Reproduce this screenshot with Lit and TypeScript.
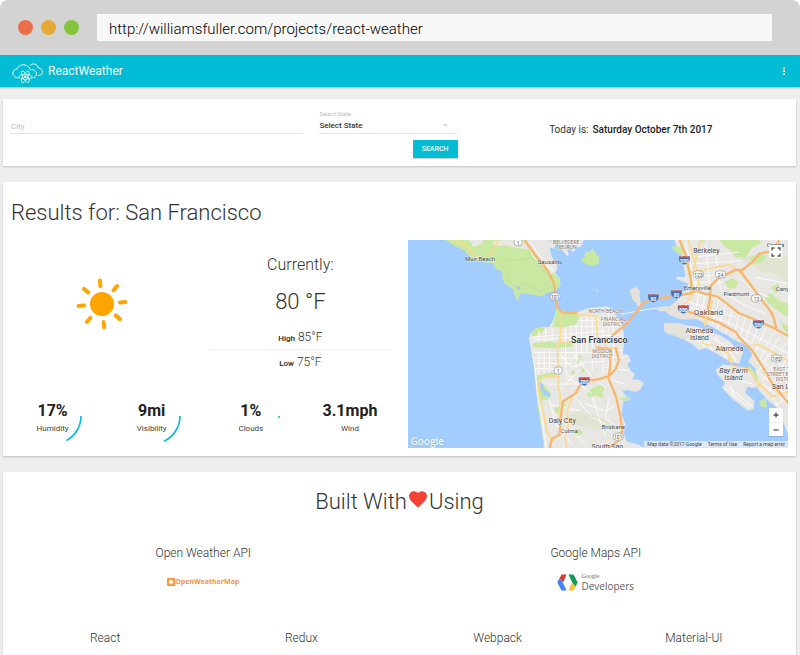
import { LitElement, html, css, svg } from "lit";
import { customElement, property } from "lit/decorators.js";

/* ---------- One reading with its percentage arc ---------- */

@customElement("weather-stat")
class WeatherStat extends LitElement {
  @property() value = "";
  @property() label = "";
  @property({ type: Number }) percent = 0;

  static styles = css`
    :host {
      position: relative;
      display: flex;
      flex-direction: column;
      align-items: center;
      height: 58px;
      padding-top: 13px;
      box-sizing: border-box;
    }
    .value {
      font-size: 16px;
      line-height: 22px;
      font-weight: 700;
      color: #212121;
    }
    .label {
      font-size: 8px;
      line-height: 14px;
      color: #424242;
    }
    .arc {
      position: absolute;
      inset: 0;
      margin: auto;
      width: 58px;
      height: 58px;
    }
    .arc circle {
      fill: none;
      stroke: #00bcd4;
      stroke-width: 1.6;
    }
  `;

  render() {
    return html`
      <span class="value">${this.value}</span>
      <span class="label">${this.label}</span>
      ${this.percent
        ? html`<svg class="arc" viewBox="0 0 58 58" aria-hidden="true">
            <circle cx="29" cy="29" r="28" pathLength="100" stroke-dasharray="${this.percent} 100" />
          </svg>`
        : null}
    `;
  }
}

/* ---------- Map of the bay ---------- */

type Place = [string, number, number, number, string];

const PLACES: Place[] = [
  ["Muir Beach", 72, 21, 6, "town"],
  ["Sausalito", 142, 24, 6, "town"],
  ["BELVEDERE", 158, 4, 5, "area"],
  ["TIBURON", 158, 9, 5, "area"],
  ["Berkeley", 298, 13, 7, "town"],
  ["Orinda", 367, 7, 6, "town"],
  ["Emeryville", 289, 50, 6, "town"],
  ["Piedmont", 328, 56, 6, "town"],
  ["Cany", 374, 51, 6, "town"],
  ["Oakland", 300, 75, 8, "town"],
  ["NORTH BEACH", 197, 73, 5, "area"],
  ["FINANCIAL", 205, 81, 5, "area"],
  ["DISTRICT", 205, 86, 5, "area"],
  ["San Francisco", 191, 103, 9, "city"],
  ["MISSION", 194, 113, 5, "area"],
  ["DISTRICT", 194, 118, 5, "area"],
  ["Alameda", 291, 93, 7, "town"],
  ["Island", 291, 100, 7, "town"],
  ["Alameda", 321, 111, 7, "town"],
  ["Bay Farm", 325, 133, 7, "isle"],
  ["Island", 325, 140, 7, "isle"],
  ["EAST 1", 373, 131, 5, "area"],
  ["STREET BU", 371, 136, 5, "area"],
  ["DISTR", 374, 141, 5, "area"],
  ["San L", 372, 149, 7, "town"],
  ["Daly City", 154, 183, 7, "town"],
  ["Colma", 161, 193, 6, "town"],
  ["Brisbane", 205, 189, 6, "town"],
  ["South San", 199, 209, 7, "town"],
];

const ROUTES: [string, number, number][] = [
  ["1", 110, 3],
  ["101", 147, 57],
  ["1", 150, 131],
  ["123", 290, 35],
  ["24", 312, 35],
  ["13", 348, 59],
  ["185", 368, 119],
  ["101", 210, 197],
];

const INTERSTATES: [string, number, number][] = [
  ["580", 276, 20],
  ["80", 268, 54],
  ["80", 245, 58],
  ["880", 275, 69],
  ["580", 350, 84],
  ["280", 176, 141],
];

@customElement("bay-map")
class BayMap extends LitElement {
  static styles = css`
    :host {
      position: relative;
      display: block;
      overflow: hidden;
      height: 208px;
    }
    .canvas {
      display: block;
      width: 100%;
      height: 208px;
      background: #a3ccff;
      font-family: Roboto, "Liberation Sans", sans-serif;
    }
    .land { fill: #e9e7e4; }
    .park { fill: #c9e8a2; }
    .hill { fill: #dfe5d0; }
    .port { fill: #e6e1d9; }
    .water { fill: #a3ccff; }
    .canal { fill: none; stroke: #a3ccff; stroke-width: 9; }
    .street { fill: none; stroke: #fff; stroke-width: 2.5; }
    .road { fill: none; stroke: #fbd98f; stroke-width: 5; stroke-linejoin: round; }
    .freeway { fill: none; stroke: #f8b66c; stroke-width: 7; stroke-linejoin: round; }
    .trail { fill: none; stroke: #aecb8a; stroke-width: 2; stroke-dasharray: 4 5; }
    .place {
      text-anchor: middle;
      paint-order: stroke;
      stroke: #fff;
      stroke-width: 1;
      stroke-opacity: 0.6;
      fill: #444;
    }
    .city { font-weight: 500; fill: #333; }
    .area { fill: #8b7566; }
    .isle { font-style: italic; }
    .shield { fill: #fff; stroke: #8a8a8a; stroke-width: 0.6; }
    .num { text-anchor: middle; fill: #555; font-size: 5px; }
    .blue { fill: #3d72b4; stroke: #fff; stroke-width: 0.4; }
    .red { fill: #d0504a; }
    .inum { text-anchor: middle; fill: #fff; font-size: 5px; font-weight: 700; }
    .control {
      display: grid;
      place-items: center;
      width: 14px;
      height: 14px;
      padding: 0;
      border: 0;
      background: #fff;
    }
    .control svg { width: 10px; height: 10px; fill: none; stroke: #555; stroke-width: 1.3; }
    .full { position: absolute; top: 5px; right: 6px; width: 13px; height: 13px; }
    .zoom { position: absolute; right: 5px; bottom: 12px; background: #fff; box-shadow: 0 1px 1px rgba(0, 0, 0, 0.15); }
    .zoom .control + .control { border-top: 1px solid #eee; }
    .logo {
      position: absolute;
      left: 3px;
      bottom: 0;
      font: 600 10px/14px "Open Sans", sans-serif;
      color: #fff;
      text-shadow: 0 0 1px #6a8fbf;
    }
    .terms {
      position: absolute;
      right: 0;
      bottom: 0;
      display: flex;
      gap: 6px;
      padding: 0 3px;
      background: rgba(235, 240, 246, 0.75);
      font-size: 5px;
      line-height: 7px;
      color: #444;
    }
    .terms a { color: inherit; text-decoration: none; }
  `;

  private terrain() {
    return svg`
      <g transform="scale(0.3333) translate(-8 -8)">
        <path class="land" d="M330 8 H425 L450 18 447 34 432 32 440 60 452 78 456 92 448 106 462 122 465 142 450 160 420 140 380 60Z"/>
        <path class="park" d="M120 8 L150 28 175 38 190 55 215 72 262 78 272 95 290 103 292 125 300 140 325 158 328 175 338 191 345 168 380 172 405 178 430 165 448 162 465 145 460 122 446 108 436 112 428 96 412 78 388 52 378 30 350 8Z"/>
        <path class="land" d="M190 8 L205 30 228 20 236 8Z M262 12 L300 8 350 10 382 45 370 38 330 30 300 24 268 26Z"/>
        <path class="road" d="M150 8 L185 28 205 50 222 62 M240 58 L262 40 280 10"/>
        <path class="land" d="M432 8 H535 L525 30 512 28 505 44 498 42 492 22 480 24 490 50 486 58 468 36 460 15 447 20Z"/>
        <path class="park" d="M526 66 L536 60 540 42 550 45 562 34 574 54 581 58 578 80 560 88 540 80Z"/>
        <path class="port" d="M568 154 L579 161 576 166Z"/>
        <path class="trail" d="M285 80 L310 100 300 125 330 150 360 140 400 160 440 150 M280 60 L330 70 380 60 M360 8 L375 60 400 85 430 120"/>
        <path class="water" d="M325 147 L347 150 340 158Z"/>
        <path class="street" d="M362 14 L385 60 415 85 440 92 M372 12 L420 80 445 100"/>

        <path class="land" d="M372 291 L392 272 432 268 446 242 452 216 480 224 516 224 548 212 600 208 612 210 630 232 650 260 656 300 652 350 668 352 676 372 665 380 676 400 688 410 680 426 702 428 715 438 703 458 688 464 668 458 650 460 660 474 674 488 654 490 647 530 660 560 655 590 664 612 700 622 718 632 H418 L405 560 393 470 385 380Z"/>
        <path class="hill" d="M480 540 L510 520 560 530 620 560 600 580 540 568 500 560Z"/>
        <path class="park" d="M452 212 L470 226 516 224 522 240 510 262 480 270 440 270 448 242Z M374 290 L392 272 418 272 410 284 384 300Z M382 318 L440 312 448 318 498 310 503 328 450 332 382 330Z M395 414 L440 405 456 410 450 418 408 424 400 436 393 430Z M396 440 L405 432 436 465 434 488 412 486 404 500 394 470Z M515 360 L528 352 524 372 512 382Z M496 402 L508 400 510 412 498 412Z M525 392 L540 398 530 408Z M542 470 L566 448 590 444 598 452 588 470 596 482 570 474 552 480Z M470 490 L482 500 475 515Z M448 510 L462 508 462 528 450 528Z M502 590 L520 574 532 586 518 596Z M640 482 L672 478 676 488 650 490Z"/>
        <path class="water" d="M402 432 L414 444 416 456 434 468 434 480 416 474 406 456Z"/>
        <path class="park" d="M393 490 L400 500 410 575 414 632 H418 L405 560Z"/>
        <path class="street" d="M372 300 L386 380 396 470 412 560 420 632 M380 300 L600 280 M384 308 L650 292 M384 346 H600 M388 362 H520 M388 378 H500 M388 394 H470 M400 340 V412 M416 340 V408 M432 340 V406 M400 280 V310 M420 276 V312 M440 272 V312 M480 270 V400 L500 430 M496 264 V310 M512 260 V390 M528 240 V345 M544 238 V345 M560 240 V400 M576 240 V320 M592 240 V410 M608 230 V420 M624 250 V380 M520 250 H630 M500 268 H640 M460 346 L500 390 540 375 600 372 M500 345 L560 420 600 450 M480 420 L520 440 560 470 M460 460 L520 400 M600 340 H652 M600 360 H655 M600 390 L670 400 M590 420 L660 440 M500 470 L560 540 600 560 M540 500 L600 520 640 500 M430 500 L520 520 M430 480 L450 560 500 620 M560 480 L600 600 M610 480 L600 540 640 580 M425 440 H520 M440 520 L540 620"/>
        <path class="road" d="M470 228 L464 290 464 312 456 315 456 345 460 400 458 450 464 470 462 520 460 560 M456 315 L500 318 M515 232 L572 236 576 300 600 320 M458 418 L410 420 398 440 402 470 414 530 424 580 440 610 M500 480 L485 520 488 570 478 600 484 630 M600 330 L636 335"/>
        <path class="freeway" d="M357 8 L388 52 412 80 432 110 446 140 451 180 454 208 470 226 514 228 M432 632 L440 604 462 592 468 520 472 492 510 468 532 430 580 426 610 416 630 395 640 370 634 345 630 330 M610 416 L614 380 612 335 570 330 M606 416 L632 480 645 540 650 580 640 608 610 632"/>

        <path class="port" d="M672 160 L690 148 702 160 704 194 712 206 700 212 690 196 680 186Z"/>
        <path class="street" d="M645 232 L700 220 785 208"/>

        <path class="land" d="M806 8 L815 38 828 55 832 80 838 110 838 120 812 118 812 126 846 138 850 158 826 165 818 186 792 208 752 216 762 222 782 222 790 232 825 246 875 246 925 272 975 302 1024 326 1040 350 1028 375 1050 395 1052 420 1045 438 1062 462 1090 492 1115 512 1135 560 1150 570 V8Z"/>
        <path class="port" d="M752 216 L792 208 820 196 838 220 880 236 860 246 825 244 788 232 782 222Z"/>
        <path class="hill" d="M1000 62 L1040 84 1070 106 1110 110 1150 140 V60 L1090 50Z"/>
        <path class="park" d="M794 28 L830 28 832 54 815 48Z M880 8 H900 L892 14Z M940 8 L1060 8 1066 20 1040 30 1020 60 990 62 975 40 955 26Z M1030 62 L1060 50 1080 58 1066 78 1046 80Z M956 135 L980 122 998 134 990 152 970 155Z M1078 178 L1096 168 1120 190 1150 200 V240 L1130 230 1105 212 1084 195Z M1096 148 L1118 140 1126 160 1110 168Z M1122 250 L1150 270 V296 L1132 275Z M1028 382 L1045 400 1058 424 1046 436 1030 410Z M1060 490 L1080 484 1084 512 1066 508Z"/>
        <path class="water" d="M928 215 L936 214 940 226 932 228Z"/>
        <path class="street" d="M840 20 L870 150 M900 20 L915 180 M930 50 L945 160 M860 60 L1000 45 M860 80 L1010 70 M860 120 L960 110 M865 135 L950 135 M860 170 L940 185 M835 190 L990 240 M845 205 L1000 270 M880 160 L870 230 M900 165 L885 240 M920 175 L905 255 M940 185 L920 262 M960 200 L935 275 M980 215 L960 290 M1000 230 L985 295 M1020 240 L1000 310 M1040 250 L1015 320 M1060 260 L1035 330 M1080 275 L1045 350 M1100 290 L1055 380 M1120 300 L1060 400 M1140 320 L1070 430 M1150 350 L1090 460 M1000 270 L1150 350 M1010 300 L1150 400 M1040 345 L1150 440 M1050 400 L1140 470 M1070 440 L1150 500 M960 170 L1010 200 1080 230 M1000 120 L1040 160 1090 180 M1100 480 L1150 560 M1110 500 L1150 480 M1050 120 L1150 140"/>
        <path class="road" d="M848 8 L875 105 880 150 M850 106 L900 96 970 82 1000 106 M868 160 L848 190 830 205 M885 8 L862 100 M1026 326 L1060 322 1150 372 M1060 440 L1100 478 1150 462 M1030 420 L1065 450 M920 190 L905 250 895 270"/>
        <path class="freeway" d="M620 295 L660 262 694 222 712 198 735 186 800 178 855 168 870 160 900 170 935 178 960 196 1000 228 1050 248 1110 275 1150 298 M822 8 L842 60 848 90 856 130 858 160 M905 225 L912 190 915 145 940 122 990 98 1010 98 1040 74 1060 50 1100 40 1120 10 M1000 96 L1040 150 1070 190 1100 230 1112 272 M840 220 L880 234 940 256 990 284 1000 300 1040 340 1068 384 1100 440 1150 500"/>

        <path class="port" d="M775 256 L830 258 850 270 850 296 830 305 776 284Z"/>
        <path class="land" d="M830 262 L880 268 920 276 960 305 1010 330 1012 345 1000 380 970 372 935 350 900 332 880 338 862 322 832 306 850 296Z"/>
        <path class="street" d="M870 275 L890 320 M890 275 L920 340 M900 290 L1000 350 M890 310 L990 365 M930 300 L960 360 M960 315 L990 372 M850 285 L900 330"/>
        <path class="road" d="M898 320 L930 326 968 350 980 370 M900 240 L890 320"/>
        <path class="canal" d="M775 250 L850 255 900 272 M925 282 L965 298 990 325 1022 330 M880 266 L905 272"/>
        <path class="land" d="M930 398 L950 382 975 384 1000 392 1038 402 1052 440 1048 452 1025 448 1018 466 1046 490 1044 514 1026 520 980 484 950 452 958 436 935 412Z"/>
        <path class="street" d="M950 448 L1030 510 M960 444 L1042 508 M975 445 L985 478 M985 390 L1000 430 1040 440 M945 395 L975 430"/>
        <path class="road" d="M968 360 L980 386 1030 396 1048 425 1100 478"/>
        <path class="land" d="M1112 512 L1150 500 V600 L1135 560Z"/>
      </g>`;
  }

  render() {
    return html`
      <svg class="canvas" viewBox="0 0 380 208" preserveAspectRatio="xMidYMid slice" role="img" aria-label="Map of San Francisco">
        ${this.terrain()}
        ${ROUTES.map(([n, x, y]) => svg`
          <rect class="shield" x=${x - (n.length > 1 ? 5 : 4)} y=${y - 4} width=${n.length > 1 ? 10 : 8} height="7" rx="3"/>
          <text class="num" x=${x} y=${y + 2}>${n}</text>`)}
        ${INTERSTATES.map(([n, x, y]) => svg`
          <path class="blue" transform="translate(${x} ${y})" d="M-5 -4 Q-2.500 -3 0 -4 Q2.500 -3 5 -4 Q7 0 4 3 L0 5 L-4 3 Q-7 0 -5 -4Z"/>
          <path class="red" transform="translate(${x} ${y})" d="M-5 -4 Q-2.500 -3 0 -4 Q2.500 -3 5 -4 L5.500 -2 H-5.500Z"/>
          <text class="inum" x=${x} y=${y + 3}>${n}</text>`)}
        ${PLACES.map(([name, x, y, size, kind]) => svg`
          <text class="place ${kind}" x=${x} y=${y} font-size=${size}>${name}</text>`)}
      </svg>
      <button class="control full" aria-label="Toggle fullscreen">
        <svg viewBox="0 0 10 10"><path d="M1 3.500V1H3.500M6.500 1H9V3.500M9 6.500V9H6.500M3.500 9H1V6.500"/></svg>
      </button>
      <div class="zoom">
        <button class="control" aria-label="Zoom in"><svg viewBox="0 0 10 10"><path d="M2.500 5H7.500M5 2.500V7.500"/></svg></button>
        <button class="control" aria-label="Zoom out"><svg viewBox="0 0 10 10"><path d="M2.500 5H7.500"/></svg></button>
      </div>
      <span class="logo">Google</span>
      <div class="terms">
        <span>Map data ©2017 Google</span>
        <a href="#terms">Terms of Use</a>
        <a href="#report">Report a map error</a>
      </div>
    `;
  }
}

/* ---------- Page ---------- */

@customElement("app-root")
class AppRoot extends LitElement {
  static styles = css`
    :host {
      display: flex;
      flex-direction: column;
      min-height: 100vh;
      background: #fff;
      font-family: Roboto, "Liberation Sans", sans-serif;
      color: #333;
    }
    h1, h2, h3, p { margin: 0; font-weight: 300; }

    .chrome {
      display: flex;
      align-items: center;
      gap: 8px;
      height: 55px;
      padding: 0 28px 0 18px;
      box-sizing: border-box;
      background: #d3d3d3;
      border-radius: 8px 8px 0 0;
    }
    .dot { width: 15px; height: 15px; border-radius: 50%; }
    .close { background: #eb6e4b; }
    .minimise { background: #e6a935; }
    .expand { background: #84c53c; }
    .address {
      flex: 1;
      min-width: 0;
      height: 27px;
      margin-left: 10px;
      padding: 2px 12px 0;
      box-sizing: border-box;
      border: 0;
      border-radius: 0;
      background: #f8f8f8;
      font: 300 15px/25px Roboto, sans-serif;
      color: #000;
    }

    .bar {
      display: flex;
      align-items: center;
      height: 32px;
      padding: 0 12px;
      background: #00bcd4;
      color: #fff;
      box-shadow: 0 1px 2px rgba(0, 0, 0, 0.25);
      z-index: 1;
    }
    .brand { width: 31px; height: 21px; margin-top: 4px; }
    .brand path, .brand ellipse { fill: none; stroke: #fff; }
    .bar h1 { flex: 1; margin-left: 5px; font-size: 12px; line-height: 16px; font-weight: 400; }
    .more { display: grid; width: 8px; height: 16px; padding: 0; border: 0; background: none; place-items: center; }
    .more svg { width: 4px; height: 10px; fill: #fff; }

    main {
      flex: 1;
      display: flex;
      flex-direction: column;
      gap: 16px;
      padding: 12px 4px 0 3px;
      background: #eee;
    }
    .card { background: #fff; box-shadow: 0 1px 2px rgba(0, 0, 0, 0.2); }

    .search { display: grid; grid-template-columns: 7fr 5fr; height: 67px; }
    .fields { display: grid; grid-template-columns: 2fr 1fr; }
    .field { display: flex; flex-direction: column; padding: 11px 8px 0; min-width: 0; }
    .caption { height: 8px; font-size: 6px; line-height: 8px; color: #bdbdbd; }
    .text, .pick {
      width: 100%;
      height: 16px;
      padding: 0;
      box-sizing: border-box;
      border: 0;
      border-bottom: 1px solid #e3e3e3;
      border-radius: 0;
      background: none;
      font: 400 8px/15px Roboto, sans-serif;
      color: #333;
    }
    .text { padding-top: 1px; }
    .text::placeholder { color: #bdbdbd; opacity: 1; }
    .pick { appearance: none; font-weight: 500; }
    .picker { position: relative; display: flex; }
    .caret { position: absolute; right: 10px; top: 6px; width: 5px; height: 3px; fill: #d5d5d5; }
    .go {
      align-self: flex-end;
      width: 45px;
      height: 18px;
      margin-top: 6px;
      padding: 0;
      border: 0;
      border-radius: 1px;
      background: #00bcd4;
      box-shadow: 0 1px 1px rgba(0, 0, 0, 0.2);
      font: 500 7px/18px Roboto, sans-serif;
      color: #fff;
    }
    .today { place-self: center; display: flex; gap: 4px; margin-bottom: 5px; font-size: 10px; line-height: 14px; font-weight: 400; }
    .today strong { font-weight: 500; color: #212121; }

    .results { display: grid; grid-template-columns: 1fr 1fr; padding-bottom: 8px; }
    .results h2 { grid-column: 1 / -1; padding: 15px 8px 11px; font-size: 22px; line-height: 32px; }
    .now { display: grid; grid-template-columns: 1fr 1fr; grid-template-rows: 147px auto; }
    .sun { place-self: center; width: 52px; height: 52px; margin-bottom: 20px; }
    .temps { display: flex; flex-direction: column; align-items: stretch; padding: 14px 8px 0; text-align: center; }
    .temps h3 { font-size: 16px; line-height: 22px; }
    .degrees { margin-top: 12px; font-size: 22px; line-height: 28px; }
    .range { height: 25px; box-sizing: border-box; font-size: 12px; line-height: 24px; }
    .high { margin-top: 9px; border-bottom: 1px solid #eee; }
    .range b { font-size: 8px; font-weight: 500; color: #212121; }
    .stats { grid-column: 1 / -1; display: grid; grid-template-columns: repeat(4, 1fr); }
    .place { padding: 0 8px; }

    .credits { flex: 1; padding: 14px 4px 0; text-align: center; }
    .credits h2 { display: flex; justify-content: center; align-items: center; font-size: 22px; line-height: 32px; }
    .heart { width: 18px; height: 17px; margin: 0 2px 6px; fill: #f44336; }
    .row { display: flex; }
    .row > * { flex: 1; }
    .row h3 { font-size: 12px; line-height: 18px; }
    .apis { height: 56px; margin-top: 26px; }
    .tech { margin-top: 29px; }
    .owm {
      display: inline-flex;
      align-items: center;
      margin-top: 15px;
      font: 700 7px/10px "Open Sans", sans-serif;
      color: #f7953a;
      text-decoration: none;
    }
    .owm svg { width: 8px; height: 8px; }
    .gdev {
      display: inline-flex;
      align-items: center;
      gap: 3px;
      margin-top: 11px;
      color: #616161;
      text-align: left;
      text-decoration: none;
    }
    .gdev svg { width: 21px; height: 17px; }
    .gdev span { display: flex; flex-direction: column; }
    .gdev small { font: 6px/7px "Liberation Serif", serif; }
    .gdev b { font: 400 10px/12px "Open Sans", sans-serif; }
  `;

  render() {
    return html`
      <div class="chrome">
        <span class="dot close"></span><span class="dot minimise"></span><span class="dot expand"></span>
        <input class="address" aria-label="Address" .value=${"http://williamsfuller.com/projects/react-weather"} />
      </div>
      <header class="bar">
        <svg class="brand" viewBox="0 0 31 21" aria-hidden="true">
          <path stroke-width="1" d="M7 14.800H6C3 14.800 0.800 12.500 0.800 10.200C0.800 7.800 3 6 5.200 6C6 3.200 8.500 1.800 11.500 1.800C15 1.800 17.500 4 18 6.500C21 6 24.500 8 24.500 11C24.500 13 22.500 14.800 20 14.800H19"/>
          <path stroke-width="0.900" d="M18 2.500C19.500 0.800 22 0.600 23.800 1.500C25.500 2.400 26 3.800 26.200 5C29 5 30.500 7 30.500 9C30.500 11.500 28.500 12.500 26 12.500"/>
          <g stroke-width="0.700">
            <ellipse cx="13.300" cy="13.800" rx="6.500" ry="2.500"/>
            <ellipse cx="13.300" cy="13.800" rx="6.500" ry="2.500" transform="rotate(60 13.300 13.800)"/>
            <ellipse cx="13.300" cy="13.800" rx="6.500" ry="2.500" transform="rotate(120 13.300 13.800)"/>
          </g>
          <circle cx="13.300" cy="13.800" r="1.200" fill="#fff"/>
        </svg>
        <h1>ReactWeather</h1>
        <button class="more" aria-label="Menu">
          <svg viewBox="0 0 4 10"><rect x="1" y="1" width="2" height="2"/><rect x="1" y="4" width="2" height="2"/><rect x="1" y="7" width="2" height="2"/></svg>
        </button>
      </header>

      <main>
        <section class="card search">
          <form class="fields" @submit=${(e: Event) => e.preventDefault()}>
            <div class="field">
              <span class="caption"></span>
              <input class="text" aria-label="City" placeholder="City" />
            </div>
            <div class="field">
              <label class="caption" for="state">Select State</label>
              <div class="picker">
                <select class="pick" id="state">
                  <option>Select State</option>
                  <option>California</option>
                </select>
                <svg class="caret" viewBox="0 0 5 3" aria-hidden="true"><path d="M0 0H5L2.500 3Z"/></svg>
              </div>
              <button class="go">SEARCH</button>
            </div>
          </form>
          <p class="today"><span>Today is:</span><strong>Saturday October 7th 2017</strong></p>
        </section>

        <section class="card results">
          <h2>Results for: San Francisco</h2>
          <div class="now">
            <svg class="sun" viewBox="-26 -26 52 52" role="img" aria-label="Sunny">
              <circle r="12" fill="#ffa500"/>
              <g stroke="#ffa500" stroke-width="4" stroke-linecap="round">
                ${[0, 1, 2, 3, 4, 5, 6, 7].map(
                  (i) => svg`<path d="M0 -18V-23.500" transform="rotate(${i * 45 - 5})"/>`
                )}
              </g>
            </svg>
            <div class="temps">
              <h3>Currently:</h3>
              <p class="degrees">80 °F</p>
              <p class="range high"><b>High</b> 85°F</p>
              <p class="range"><b>Low</b> 75°F</p>
            </div>
            <div class="stats">
              <weather-stat value="17%" label="Humidity" percent="17"></weather-stat>
              <weather-stat value="9mi" label="Visibility" percent="18"></weather-stat>
              <weather-stat value="1%" label="Clouds" percent="1"></weather-stat>
              <weather-stat value="3.1mph" label="Wind"></weather-stat>
            </div>
          </div>
          <div class="place"><bay-map></bay-map></div>
        </section>

        <section class="card credits">
          <h2>
            Built With<svg class="heart" viewBox="0 0 20 19" role="img" aria-label="love"><path d="M10 18.500L8.500 17.200C3.400 12.600 0 9.500 0 5.700C0 2.600 2.400 0.200 5.500 0.200C7.200 0.200 8.900 1 10 2.300C11.100 1 12.800 0.200 14.500 0.200C17.600 0.200 20 2.600 20 5.700C20 9.500 16.600 12.600 11.500 17.200Z"/></svg>Using
          </h2>
          <div class="row apis">
            <div>
              <h3>Open Weather API</h3>
              <a class="owm" href="#openweathermap">
                <svg viewBox="0 0 8 8" aria-hidden="true"><rect width="8" height="8" rx="0.500" fill="#f7953a"/><path d="M4 1V7M1 4H7M2 2L6 6M6 2L2 6" stroke="#fff" stroke-width="0.600"/><circle cx="4" cy="4" r="1.700" fill="#fff"/></svg>OpenWeatherMap
              </a>
            </div>
            <div>
              <h3>Google Maps API</h3>
              <a class="gdev" href="#google-developers">
                <svg viewBox="0 0 21 17" aria-hidden="true">
                  <path fill="#d83b2f" d="M4.500 0.500H9.500L6 8.500L2.500 4.500Z"/>
                  <path fill="#4285f4" d="M2.500 4.300L5.800 8.500L9.500 16.500H4.500L0.300 8.500Z"/>
                  <path fill="#0f9d58" d="M11.500 0.500H16.500L20.700 8.500L18.500 12.700L15.200 8.500Z"/>
                  <path fill="#fbc02d" d="M15.200 8.500L18.500 12.700L16.500 16.500H11.500Z"/>
                </svg>
                <span><small>Google</small><b>Developers</b></span>
              </a>
            </div>
          </div>
          <div class="row tech">
            <h3>React</h3>
            <h3>Redux</h3>
            <h3>Webpack</h3>
            <h3>Material-UI</h3>
          </div>
        </section>
      </main>
    `;
  }
}
